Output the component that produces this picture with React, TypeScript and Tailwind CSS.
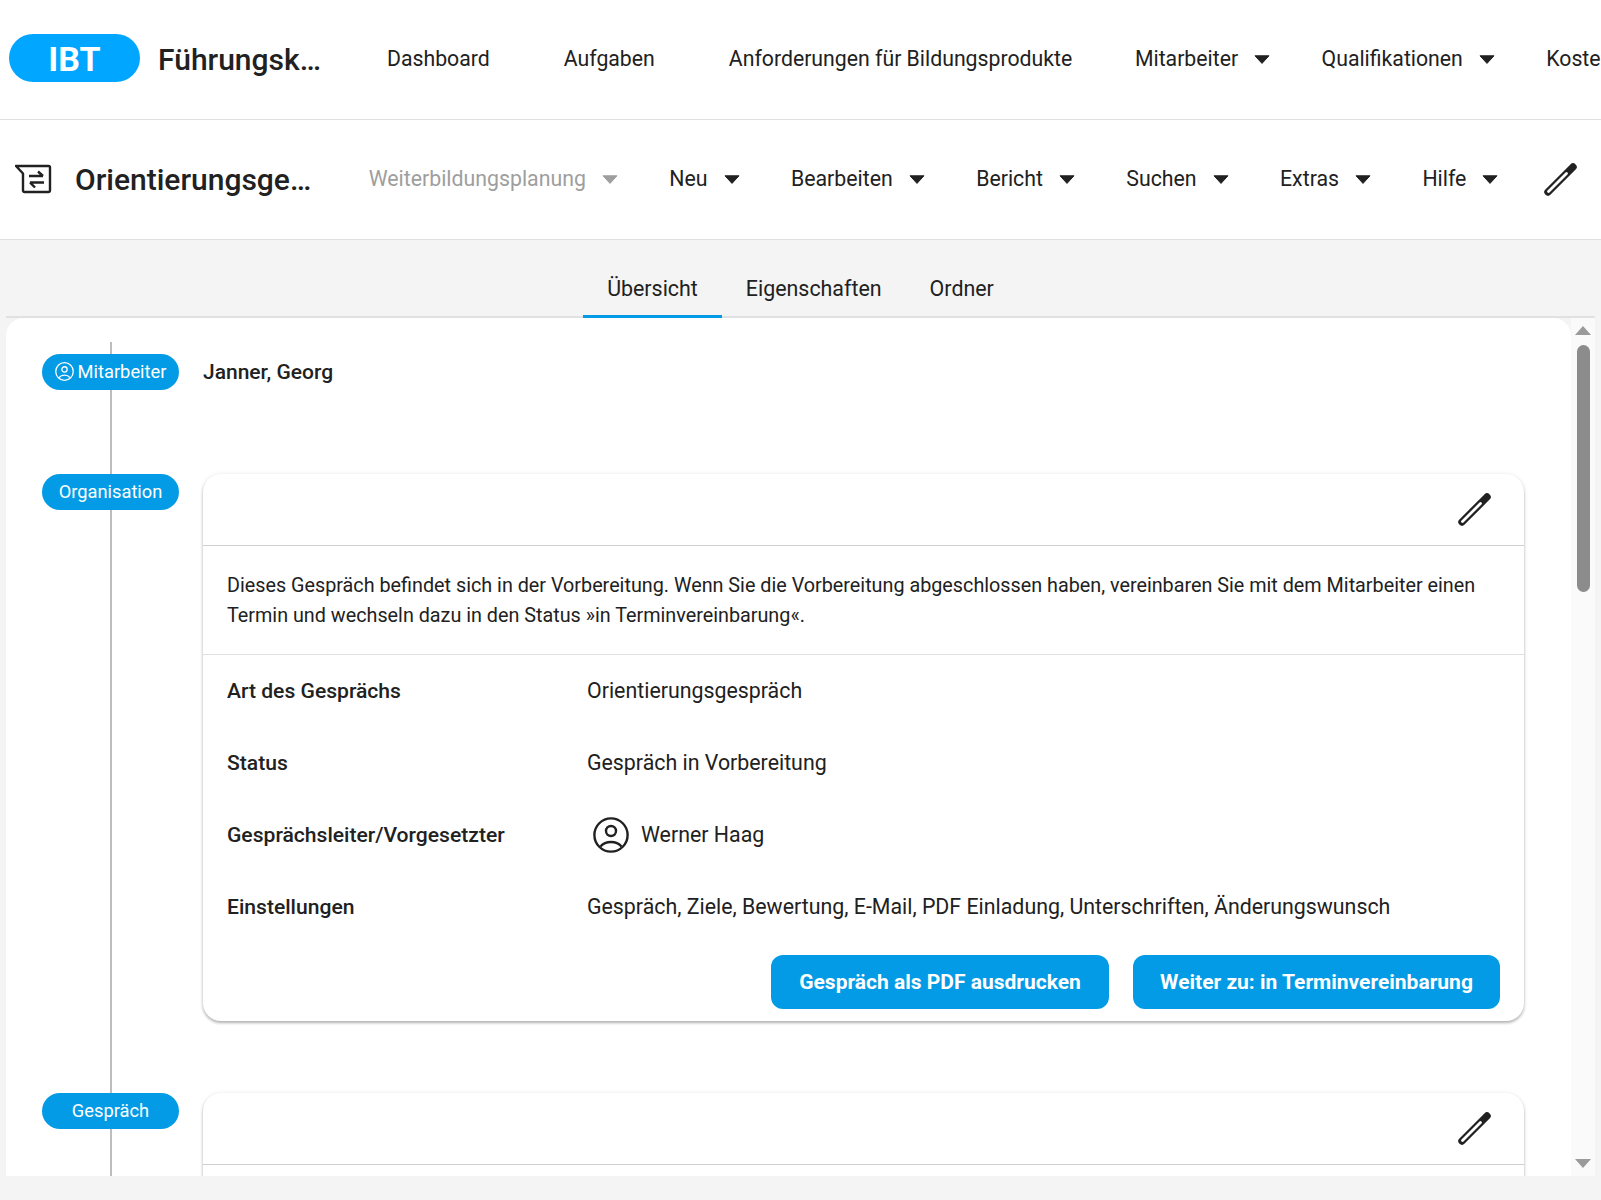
import { ReactNode } from 'react';

const Caret = ({ muted }: { muted?: boolean }) => (
  <svg width="16" height="9" viewBox="0 0 16 9" className="shrink-0">
    <path d="M1 .8h14L8 8.400z" fill={muted ? '#9e9e9e' : '#212121'} stroke={muted ? '#9e9e9e' : '#212121'} strokeWidth="1" strokeLinejoin="round" />
  </svg>
);

const Pen = () => (
  <svg width="34" height="34" viewBox="0 0 34 34" fill="none" className="shrink-0">
    <path d="M4 30 29 5" stroke="#212121" strokeWidth="7.400" strokeLinecap="round" />
    <path d="M4.500 29.500 22.500 11.500" stroke="#fff" strokeWidth="2.800" strokeLinecap="round" />
  </svg>
);

const UserCircle = ({ size, color }: { size: number; color: string }) => (
  <svg width={size} height={size} viewBox="0 0 36 36" fill="none" stroke={color} strokeWidth="2.400" className="shrink-0">
    <circle cx="18" cy="18" r="16.600" />
    <circle cx="18" cy="14" r="5" />
    <path d="M7.500 29.500C10 26.500 14 25 18 25s8 1.500 10.500 4.500" />
  </svg>
);

const DocIcon = () => (
  <svg width="38" height="30" viewBox="0 0 38 30" fill="none" stroke="#212121" strokeWidth="2.400" strokeLinejoin="round" className="shrink-0">
    <path d="M1 2h32.500a1.500 1.500 0 0 1 1.500 1.500v23a1.500 1.500 0 0 1-1.500 1.500H9.500A1.500 1.500 0 0 1 8 26.500V9.500Z" />
    <path d="M14 12h14M23 7.500l5 4.500M29 18.500H15M20 23.500l-5-5" />
  </svg>
);

const DropItem = ({ label, muted }: { label: string; muted?: boolean }) => (
  <div className="flex shrink-0 items-center gap-[16px] px-[25.700px]">
    <span className={muted ? 'text-[#9e9e9e]' : ''}>{label}</span>
    <Caret muted={muted} />
  </div>
);

const Pill = ({ children }: { children: ReactNode }) => (
  <div className="relative z-10 flex h-[36px] w-[137px] shrink-0 items-center justify-center gap-[4px] rounded-full bg-[#039be5] pb-[1px] text-[18.300px] text-white">
    {children}
  </div>
);

const InfoRow = ({ label, children }: { label: string; children: ReactNode }) => (
  <div className="flex h-[72px] items-center text-[21.350px]">
    <div className="w-[360px] shrink-0 text-[21.100px] font-medium">{label}</div>
    <div className="flex items-center">{children}</div>
  </div>
);

const cardClass =
  'flex-1 rounded-[18px] bg-white shadow-[0_2px_3px_rgba(0,0,0,0.28),0_0_5px_rgba(0,0,0,0.07)]';

const CardHeader = () => (
  <div className="flex h-[72px] items-center justify-end border-b border-[#cfcfcf] pr-[32px] pb-[1px]">
    <Pen />
  </div>
);

export default function App() {
  return (
    <div className="flex h-[1200px] w-[1601px] flex-col overflow-hidden bg-[#f4f4f4] font-['Roboto',sans-serif] text-[#212121]">
      <header className="flex h-[120px] shrink-0 items-center overflow-hidden border-b border-[#e0e0e0] bg-white pb-[1px] pl-[9px] text-[21.250px] whitespace-nowrap">
        <div className="mb-[3px] flex h-[48px] w-[131px] shrink-0 items-center justify-center rounded-full bg-[#00a6ff] pt-[3px] text-[34px] font-bold text-white">
          IBT
        </div>
        <div className="ml-[18px] w-[169px] shrink-0 text-[30px] font-medium">Führungsk…</div>
        <div className="w-[23px] shrink-0" />
        <span className="px-[37px]">Dashboard</span>
        <span className="px-[37px]">Aufgaben</span>
        <span className="px-[37px]">Anforderungen für Bildungsprodukte</span>
        <DropItem label="Mitarbeiter" />
        <DropItem label="Qualifikationen" />
        <span className="px-[25.700px]">Kosten</span>
      </header>

      <nav className="flex h-[120px] shrink-0 items-center overflow-hidden border-b border-[#e0e0e0] bg-white pb-[1px] pl-[15px] text-[21.300px] whitespace-nowrap">
        <DocIcon />
        <div className="ml-[22px] w-[268px] shrink-0 text-[30px] font-medium">Orientierungsge…</div>
        <DropItem label="Weiterbildungsplanung" muted />
        <DropItem label="Neu" />
        <DropItem label="Bearbeiten" />
        <DropItem label="Bericht" />
        <DropItem label="Suchen" />
        <DropItem label="Extras" />
        <DropItem label="Hilfe" />
        <div className="ml-[20px]">
          <Pen />
        </div>
      </nav>

      <div className="flex h-[78px] shrink-0 items-end justify-center px-[6px]">
        <div className="flex w-full justify-center border-b-[2px] border-[#dfe1e3] text-[21.400px]">
          <div className="-mb-[2px] flex h-[62px] items-center border-y-[3px] border-t-transparent border-b-[#039be5] px-[24px] pt-[5px]">Übersicht</div>
          <div className="-mb-[2px] flex h-[62px] items-center border-y-[3px] border-transparent px-[24px] pt-[5px]">Eigenschaften</div>
          <div className="-mb-[2px] flex h-[62px] items-center border-y-[3px] border-transparent px-[24px] pt-[5px]">Ordner</div>
        </div>
      </div>

      <main className="mx-[6px] flex h-[858px] shrink-0 overflow-hidden">
        <div className="relative flex-1 overflow-hidden rounded-t-[18px] bg-white pt-[36px] pr-[47px] pl-[36px]">
          <div className="absolute top-[24px] bottom-0 left-[104px] w-[2px] bg-[#bdbdbd]" />

          <div className="flex items-center gap-[24px]">
            <Pill>
              <UserCircle size={19} color="#fff" />
              Mitarbeiter
            </Pill>
            <div className="pt-[2px] text-[21px] font-medium">Janner, Georg</div>
          </div>

          <div className="mt-[84px] flex items-start gap-[24px]">
            <Pill>Organisation</Pill>
            <div className={cardClass}>
              <CardHeader />
              <div className="border-b border-[#e0e0e0] px-[24px] pt-[25px] pb-[23px] text-[19.780px] leading-[30px]">
                Dieses Gespräch befindet sich in der Vorbereitung. Wenn Sie die Vorbereitung abgeschlossen haben, vereinbaren Sie mit dem Mitarbeiter einen Termin und wechseln dazu in den Status »in Terminvereinbarung«.
              </div>
              <div className="px-[24px]">
                <InfoRow label="Art des Gesprächs">Orientierungsgespräch</InfoRow>
                <InfoRow label="Status">Gespräch in Vorbereitung</InfoRow>
                <InfoRow label="Gesprächsleiter/Vorgesetzter">
                  <span className="ml-[6px]">
                    <UserCircle size={36} color="#212121" />
                  </span>
                  <span className="ml-[12px]">Werner Haag</span>
                </InfoRow>
                <InfoRow label="Einstellungen">
                  Gespräch, Ziele, Bewertung, E-Mail, PDF Einladung, Unterschriften, Änderungswunsch
                </InfoRow>
              </div>
              <div className="mt-[12px] flex justify-end gap-[24px] pr-[24px] pb-[12px]">
                <button className="h-[54px] w-[338px] rounded-[12px] bg-[#039be5] pt-[1px] text-[21px] font-bold text-white">
                  Gespräch als PDF ausdrucken
                </button>
                <button className="h-[54px] w-[367px] rounded-[12px] bg-[#039be5] pt-[1px] text-[21px] font-bold text-white">
                  Weiter zu: in Terminvereinbarung
                </button>
              </div>
            </div>
          </div>

          <div className="mt-[72px] flex items-start gap-[24px]">
            <Pill>Gespräch</Pill>
            <div className={cardClass}>
              <CardHeader />
              <div className="h-[60px]" />
            </div>
          </div>
        </div>

        <div className="flex w-[24px] shrink-0 flex-col items-center bg-[#fafafa] pt-[8px] pb-[8px]">
          <svg width="16" height="9" viewBox="0 0 16 9" className="shrink-0">
            <path d="M8 0l8 9H0z" fill="#9a9a9a" />
          </svg>
          <div className="mt-[10px] h-[247px] w-[13px] shrink-0 rounded-full bg-[#8c8c8c]" />
          <div className="flex-1" />
          <svg width="16" height="9" viewBox="0 0 16 9" className="shrink-0">
            <path d="M0 0h16L8 9z" fill="#9a9a9a" />
          </svg>
        </div>
      </main>
    </div>
  );
}
